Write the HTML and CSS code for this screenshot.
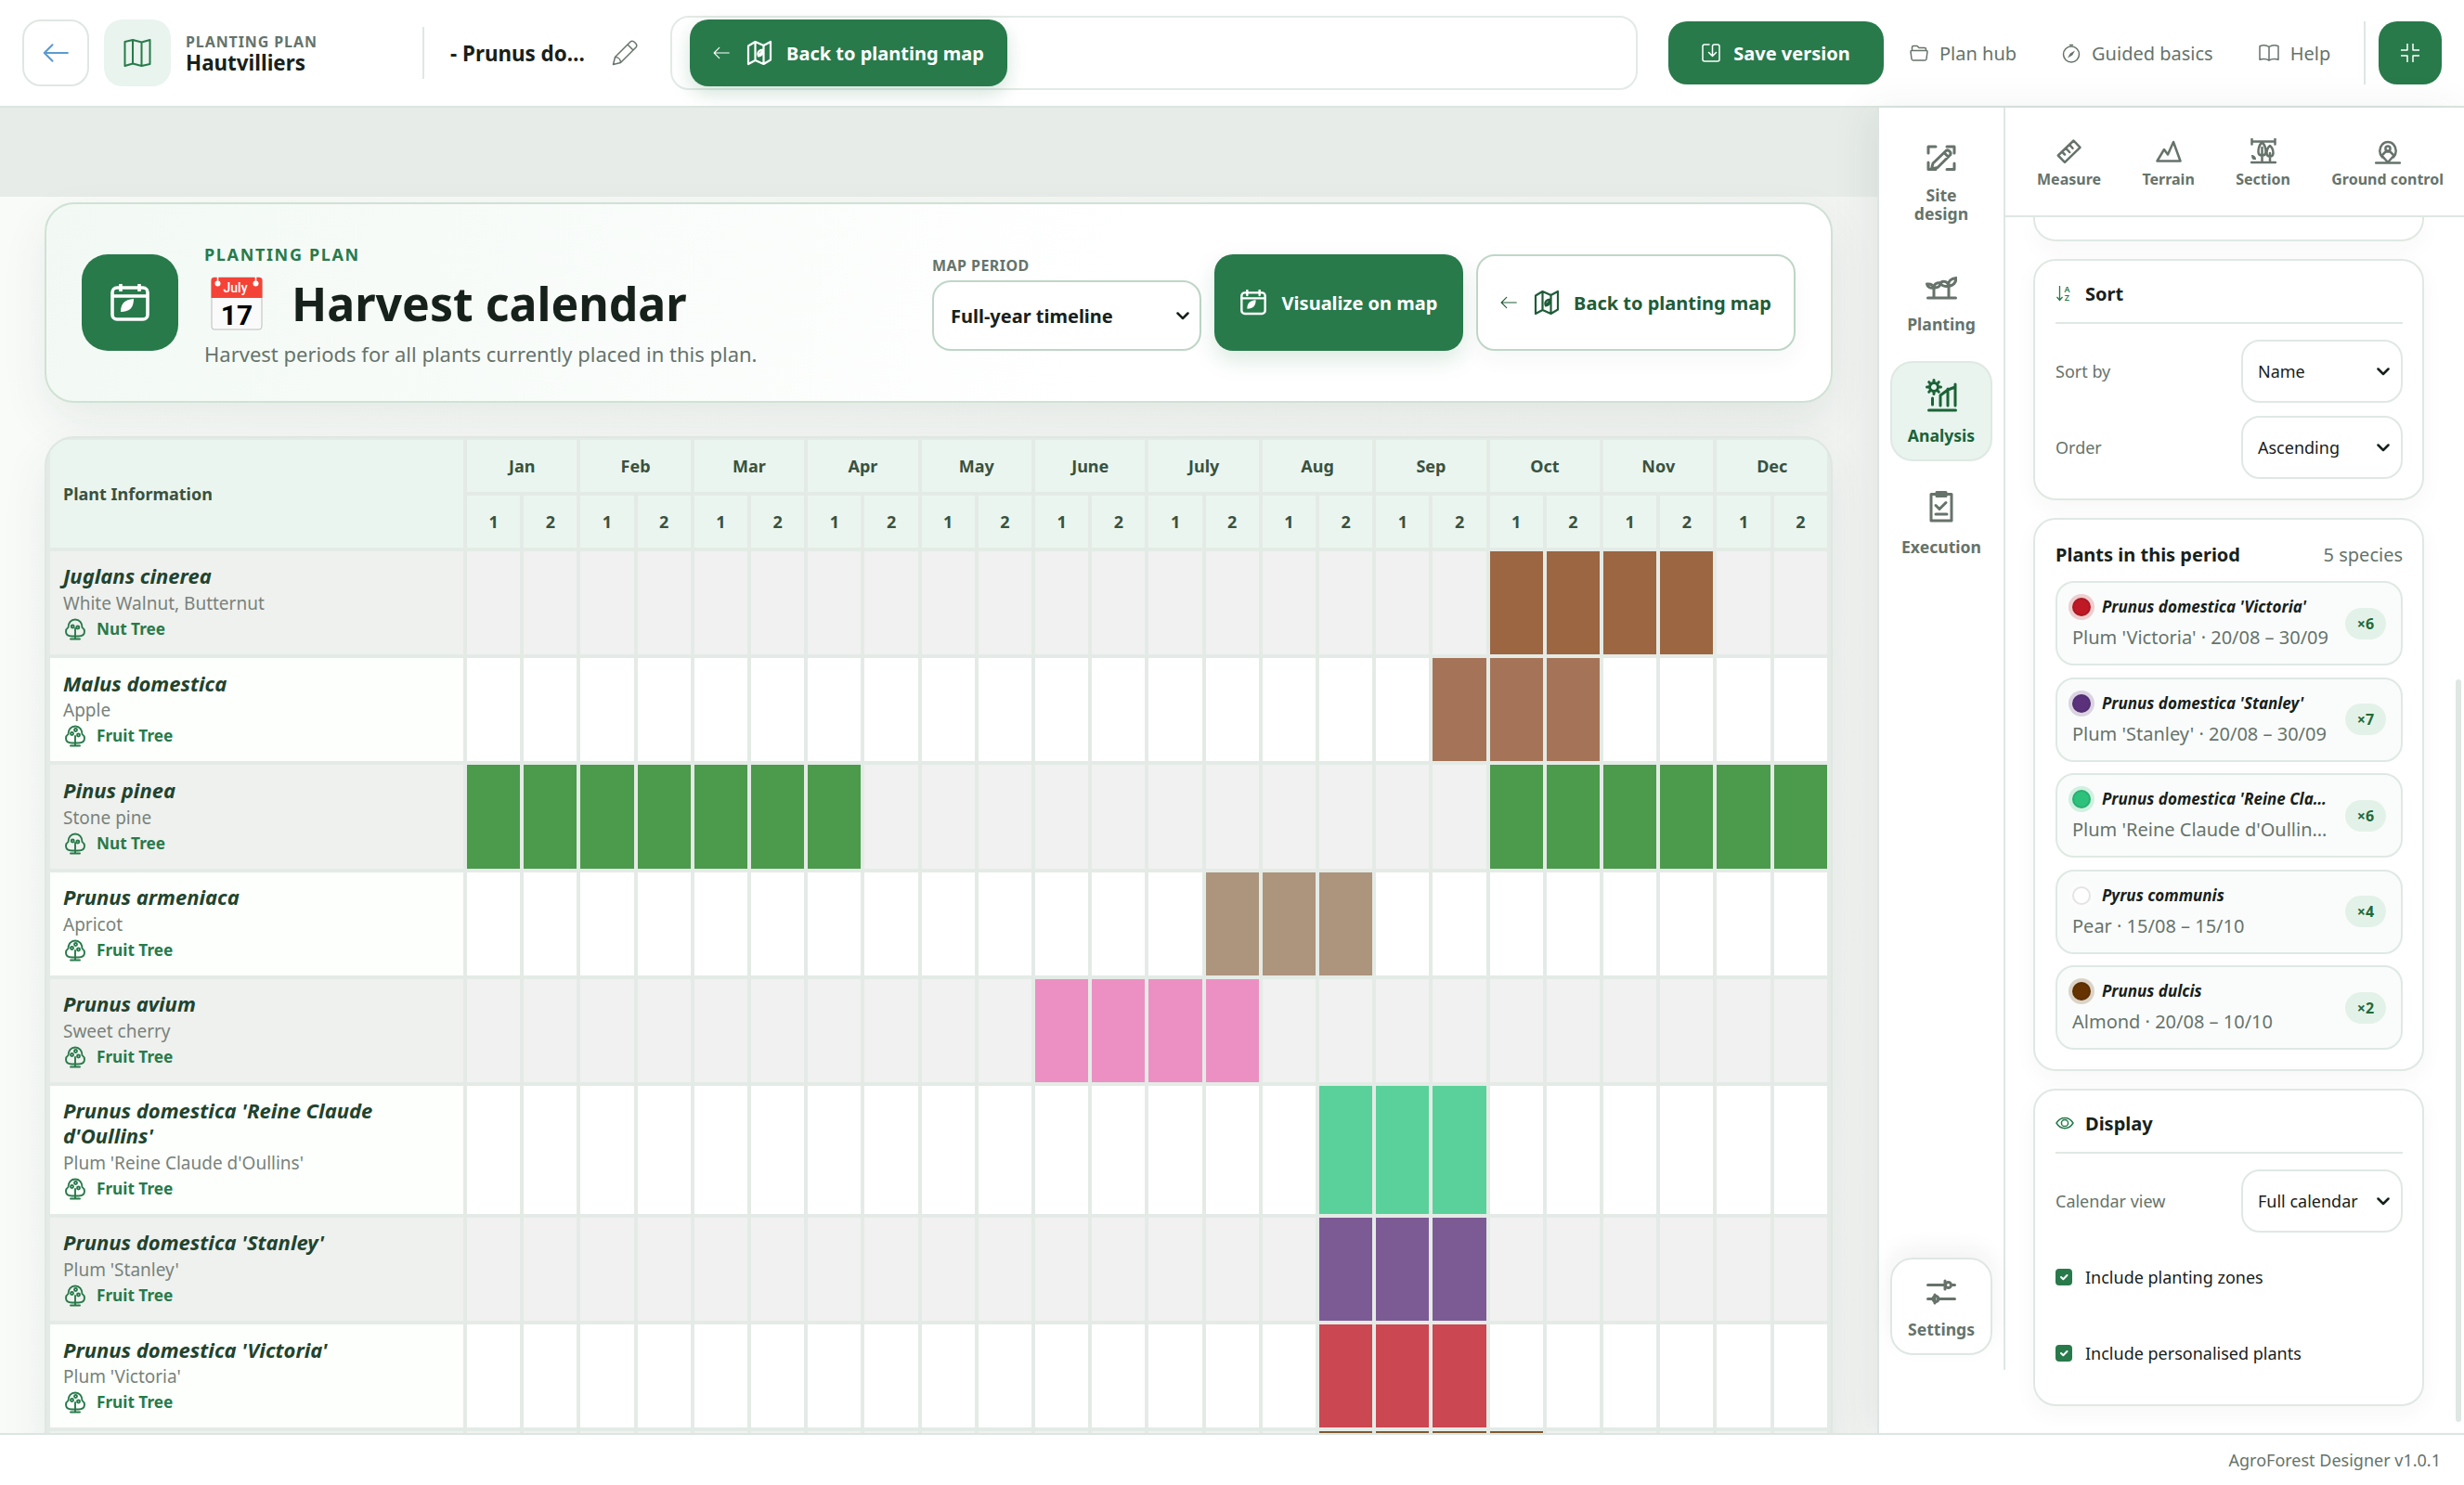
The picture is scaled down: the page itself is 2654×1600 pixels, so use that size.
FILE: index.html
```html
<!DOCTYPE html>
<html lang="en">
<head>
  <meta charset="UTF-8" />
  <meta name="viewport" content="width=device-width, initial-scale=1.0"/>
  <title>Harvest calendar – AgroForest Designer</title>
  <link rel="stylesheet" href="styles.css">
</head>
<body>

  <svg class="sprite" aria-hidden="true">
    <symbol id="i-arrow" viewBox="0 0 24 24"><path d="M23 12H2M9 4.500L1.500 12 9 19.500"/></symbol>
    <symbol id="i-map" viewBox="0 0 30 30"><path d="M1.500 3L10 1l9.500 2.500L28.500 1v26L19.500 29 10 26.500 1.500 29zM10 1v25.500M19.500 3.500V29"/></symbol>
    <symbol id="i-planmap" viewBox="0 0 28 28"><path d="M2 6.500L9.500 2l9 4L26 2v19.500L18.500 26l-9-4L2 26zM9.500 2v20M18.500 6v20"/><path d="M13 17.500c-2-4 1-7 5-7 0 4.500-1.500 6.500-5 7zm0 0l3.500-4.500"/></symbol>
    <symbol id="i-cal" viewBox="0 0 42 42"><rect x="2" y="5" width="38" height="34" rx="5"/><path d="M2 14h38M11 1v8M31 1v8"/><path class="solid" d="M11 31c0-9 4-13 14-14 0 9-4 14-14 14z"/></symbol>
    <symbol id="i-pencil" viewBox="0 0 28 28"><path d="M1.500 26.500l2-8L20 2c1.500-1.200 3-1 4.500.5l1 1c1.500 1.500 1.700 3 .5 4.500L9.500 24.500zM17 5l6 6M3.500 18.500c3.500 0 6 2.500 6 6"/></symbol>
    <symbol id="i-save" viewBox="0 0 20 20"><path d="M8 1H3Q1 1 1 3v14q0 2 2 2h14q2 0 2-2V3q0-2-2-2h-3.500q-2 0-2 2v10M7.500 9.500l4 4 4-4"/></symbol>
    <symbol id="i-folder" viewBox="0 0 20 18"><path d="M2.500 6V3q0-1.500 1.500-1.500h4l2 2h6q1.500 0 1.500 1.500v1M2 6.500h16q1 0 1 1l-1 8q-.2 1.500-1.500 1.500h-13Q2.200 17 2 15.500l-1-8q0-1 1-1z"/></symbol>
    <symbol id="i-compass" viewBox="0 0 20 21"><circle cx="10" cy="11.500" r="8.500"/><path d="M8.500 1.500h3"/><path class="solid" d="M14 7.500l-2.800 5L6 15.500l2.800-5z"/></symbol>
    <symbol id="i-book" viewBox="0 0 22 18"><path d="M11 2.500C8 .5 4 .5 1 1.800v14.500c3-1 7-1 10 .7 3-1.700 7-1.700 10-.7V1.800C18 .5 14 .5 11 2.500zV17"/></symbol>
    <symbol id="i-shrink" viewBox="0 0 20 20"><path d="M7 0v7H0M13 0v7h7M0 13h7v7M20 13h-7v7"/></symbol>

    <symbol id="i-design" viewBox="0 0 32 28"><path d="M2 9V2h8M22 2h8v7M30 20v6.500h-8M10 26.500H2V19"/><path d="M5.500 26l1.500-6L21 6.500q2-1.500 4 0.500t.5 4L12 24.500zM19 8.500l4.500 4.500"/></symbol>
    <symbol id="i-plant" viewBox="0 0 34 26"><path d="M2.500 24h30M9 24V13M25 24V11M9 13C5 14 2 12 1.500 9 5.500 8.500 8 10 9 13zM9 13c0-4 3-5.500 7-5.500 0 4-2.500 6-7 5.500zM25 11c-4 1-8 0-9-3.500C20 5 24 6.500 25 11zM25 11c-1-5 2.500-8 8-8.500C33 7 30 11 25 11z"/></symbol>
    <symbol id="i-analysis" viewBox="0 0 34 36"><circle cx="9" cy="9" r="4.500"/><path d="M9 1.500v3M9 13.500v3M1.500 9h3M13.500 9h3M3.700 3.700l2 2M14.300 3.700l-2 2M3.700 14.300l2-2M14.300 14.300l-2-2M3.500 34h29M7.500 21v7M16 29V18M24 29V11M32 29V6M16 18l8-6 8-3"/></symbol>
    <symbol id="i-task" viewBox="0 0 26 34"><path d="M2 3.500h22v28.500H2zM8 1.500h10v4H8zM7 15.500l4 4 7-7M7 25h12"/></symbol>
    <symbol id="i-sliders" viewBox="0 0 32 28"><path d="M1.500 6.500h18M27 6.500h3.500M1.500 21.500H6M12.500 21.500h18M20 2v9M9 17v9"/><circle cx="23.500" cy="6.500" r="3"/><circle cx="10" cy="21.500" r="3"/></symbol>

    <symbol id="i-measure" viewBox="0 0 28 28"><path d="M1.800 18.500L18.500 2.500l7 7.300L9 25.800zM6 14.500l3 3M10 10.500l4.200 4.500M14 6.700l3.500 4"/></symbol>
    <symbol id="i-terrain" viewBox="0 0 28 28"><path d="M1.500 24.500L9 12l4 5.500L19 4l7.500 20.500z"/></symbol>
    <symbol id="i-section" viewBox="0 0 28 28"><path d="M1.500 0.500v6M26.500 .5v6M1.500 3.500h25M1 26h26M12.500 25V10M21 25v-9M12.500 4.500c-3 2.500-4 6-4 10q0 4 4 4t4-4c0-4-1-7.500-4-10zM21 8c-2.500 2-3.500 5-3.500 8q0 3.500 3.500 3.500t3.500-3.500c0-3-1-6-3.500-8z"/><path class="solid" d="M1 18c3 0 5 1.500 5 5H3.500C2 23 1 21 1 18z"/></symbol>
    <symbol id="i-ground" viewBox="0 0 28 28"><path d="M1 26.500h26M8 20.500A8.700 9.500 0 1 1 20 20.500M14 26c-2.500-3-5-5.500-6.500-7.500l4-4h5l4 4C19 20.500 16.500 23 14 26z"/><circle cx="14" cy="11" r="2.600"/></symbol>

    <symbol id="i-nut" viewBox="0 0 24 24"><path d="M7 22.500h10M12 22V11M8.500 19.500h7c4 0 6.500-2 6.500-5 0-2-1-3.500-2.500-4.500C19.500 5 16.500 1.500 12 1.500S4.500 5 4.500 10C3 11 2 12.500 2 14.500c0 3 2.500 5 6.500 5z"/><circle cx="9.200" cy="9" r="1.500"/><circle cx="14.800" cy="10" r="1.500"/></symbol>
    <symbol id="i-fruit" viewBox="0 0 24 24"><path d="M7 22.500h10M12 22V12M8.500 19.500h7c4 0 6.500-2 6.500-5 0-2-1-3.500-2.500-4.500C19.500 5 16.500 1.500 12 1.500S4.500 5 4.500 10C3 11 2 12.500 2 14.500c0 3 2.500 5 6.500 5z"/><circle cx="8.500" cy="9.500" r="1.500"/><circle cx="12.500" cy="5.500" r="1.500"/><circle cx="15.500" cy="11" r="1.500"/></symbol>

    <symbol id="i-eye" viewBox="0 0 20 14"><path d="M1 7c4.500-7.500 13.500-7.500 18 0-4.500 7.500-13.500 7.500-18 0z"/><circle cx="10" cy="7" r="3.600"/></symbol>
    <symbol id="i-chev" viewBox="0 0 14 9"><path d="M1.500 1.500L7 7l5.500-5.500"/></symbol>
    <symbol id="i-check" viewBox="0 0 18 18"><path d="M6 9l2.300 2.200L12.500 7"/></symbol>
  </svg>

  <header class="topbar">
    <button class="back-btn"><svg class="icon"><use href="#i-arrow"/></svg></button>
    <div class="plan-tile"><svg class="icon"><use href="#i-map"/></svg></div>
    <div class="plan-name">
      <span class="eyebrow">PLANTING PLAN</span>
      <strong>Hautvilliers</strong>
    </div>
    <div class="version-name">
      <strong>- Prunus do…</strong>
      <svg class="icon"><use href="#i-pencil"/></svg>
    </div>
    <div class="context-bar">
      <button class="primary-btn map-btn">
        <svg class="icon arrow"><use href="#i-arrow"/></svg>
        <svg class="icon map"><use href="#i-planmap"/></svg>
        Back to planting map
      </button>
    </div>
    <button class="primary-btn save-btn"><svg class="icon"><use href="#i-save"/></svg>Save version</button>
    <nav class="top-links">
      <a><svg class="icon folder"><use href="#i-folder"/></svg>Plan hub</a>
      <a><svg class="icon compass"><use href="#i-compass"/></svg>Guided basics</a>
      <a><svg class="icon book"><use href="#i-book"/></svg>Help</a>
    </nav>
    <div class="shrink-wrap">
      <button class="primary-btn shrink-btn"><svg class="icon"><use href="#i-shrink"/></svg></button>
    </div>
  </header>

  <div class="workspace">
    <main>
      <div class="map-strip"></div>

      <section class="hero">
        <div class="hero-icon"><svg class="icon"><use href="#i-cal"/></svg></div>
        <div class="hero-text">
          <span class="hero-eyebrow">PLANTING PLAN</span>
          <h1>
            <svg class="date-icon" viewBox="0 0 56 58">
              <rect class="page" x="1" y="1" width="54" height="56" rx="3"/>
              <path class="band" d="M.5 23V4q0-3 3-3h49q3 0 3 3v19z"/>
              <circle cx="7.500" cy="7.500" r="3"/><circle cx="48.500" cy="7.500" r="3"/>
              <path class="pin" d="M7.500 0v7M48.500 0v7"/>
              <text class="month" x="26.500" y="17">July</text>
              <text class="day" x="28" y="52">17</text>
            </svg>
            Harvest calendar
          </h1>
          <p>Harvest periods for all plants currently placed in this plan.</p>
        </div>
        <div class="hero-actions">
          <div class="period">
            <label>MAP PERIOD</label>
            <div class="select">Full-year timeline<svg class="icon"><use href="#i-chev"/></svg></div>
          </div>
          <button class="primary-btn visualize-btn"><svg class="icon"><use href="#i-cal"/></svg>Visualize on map</button>
          <button class="outline-btn">
            <svg class="icon arrow"><use href="#i-arrow"/></svg>
            <svg class="icon map"><use href="#i-planmap"/></svg>
            Back to planting map
          </button>
        </div>
      </section>

      <div class="calendar">
        <table id="harvestTable">
          <thead></thead>
          <tbody></tbody>
        </table>
      </div>
    </main>

    <aside class="sidebar">
      <nav class="rail">
        <a class="rail-item tall"><svg class="icon design"><use href="#i-design"/></svg>Site<br>design</a>
        <a class="rail-item"><svg class="icon planting"><use href="#i-plant"/></svg>Planting</a>
        <a class="rail-item active"><svg class="icon analysis"><use href="#i-analysis"/></svg>Analysis</a>
        <a class="rail-item"><svg class="icon task"><use href="#i-task"/></svg>Execution</a>
        <a class="rail-item settings"><svg class="icon sliders"><use href="#i-sliders"/></svg>Settings</a>
      </nav>

      <div class="panel">
        <nav class="panel-tabs">
          <a><svg class="icon"><use href="#i-measure"/></svg>Measure</a>
          <a><svg class="icon"><use href="#i-terrain"/></svg>Terrain</a>
          <a><svg class="icon"><use href="#i-section"/></svg>Section</a>
          <a><svg class="icon"><use href="#i-ground"/></svg>Ground control</a>
        </nav>

        <div class="panel-body">
          <div class="card card-cut"></div>

          <div class="card">
            <h2>
              <svg class="sort-icon" viewBox="0 0 18 18">
                <path d="M4.500 1v15M1.500 13l3 3.500 3-3.500"/>
                <text x="9.500" y="8">A</text><text x="9.700" y="17">Z</text>
              </svg>
              Sort
            </h2>
            <div class="field"><label>Sort by</label><div class="select small">Name<svg class="icon"><use href="#i-chev"/></svg></div></div>
            <div class="field"><label>Order</label><div class="select small">Ascending<svg class="icon"><use href="#i-chev"/></svg></div></div>
          </div>

          <div class="card">
            <div class="card-head"><strong>Plants in this period</strong><span>5 species</span></div>
            <div class="species-list" id="speciesList"></div>
          </div>

          <div class="card display-card">
            <h2><svg class="icon eye"><use href="#i-eye"/></svg>Display</h2>
            <div class="field"><label>Calendar view</label><div class="select small">Full calendar<svg class="icon"><use href="#i-chev"/></svg></div></div>
            <div class="check"><svg class="icon"><use href="#i-check"/></svg>Include planting zones</div>
            <div class="check"><svg class="icon"><use href="#i-check"/></svg>Include personalised plants</div>
          </div>
        </div>
        <div class="scroll-thumb"></div>
      </div>
    </aside>
  </div>

  <footer>AgroForest Designer v1.0.1</footer>

  <script>
    const months = ["Jan", "Feb", "Mar", "Apr", "May", "June", "July", "Aug", "Sep", "Oct", "Nov", "Dec"];

    // periods are half months, 0 = first half of January
    const plants = [
      { name: "Juglans cinerea", common: "White Walnut, Butternut", type: "Nut Tree", color: "#9b6641", periods: [[18, 21]] },
      { name: "Malus domestica", common: "Apple", type: "Fruit Tree", color: "#a57458", periods: [[17, 19]] },
      { name: "Pinus pinea", common: "Stone pine", type: "Nut Tree", color: "#4c9a4b", periods: [[0, 6], [18, 23]] },
      { name: "Prunus armeniaca", common: "Apricot", type: "Fruit Tree", color: "#ad947c", periods: [[13, 15]] },
      { name: "Prunus avium", common: "Sweet cherry", type: "Fruit Tree", color: "#ec90c4", periods: [[10, 13]] },
      { name: "Prunus domestica 'Reine Claude d'Oullins'", common: "Plum 'Reine Claude d'Oullins'", type: "Fruit Tree", color: "#5ad19a", periods: [[15, 17]] },
      { name: "Prunus domestica 'Stanley'", common: "Plum 'Stanley'", type: "Fruit Tree", color: "#7c5b95", periods: [[15, 17]] },
      { name: "Prunus domestica 'Victoria'", common: "Plum 'Victoria'", type: "Fruit Tree", color: "#cb4751", periods: [[15, 17]] },
      { name: "", common: "", type: "", color: "#80592f", periods: [[15, 18]] }
    ];

    const species = [
      { name: "Prunus domestica 'Victoria'", info: "Plum 'Victoria' · 20/08 – 30/09", count: 6, color: "#be1925" },
      { name: "Prunus domestica 'Stanley'", info: "Plum 'Stanley' · 20/08 – 30/09", count: 7, color: "#5b317b" },
      { name: "Prunus domestica 'Reine Cla…", info: "Plum 'Reine Claude d'Oullin…", count: 6, color: "#2dc27c" },
      { name: "Pyrus communis", info: "Pear · 15/08 – 15/10", count: 4, color: "#ffffff" },
      { name: "Prunus dulcis", info: "Almond · 20/08 – 10/10", count: 2, color: "#653200" }
    ];

    function renderTable() {
      document.querySelector("#harvestTable thead").innerHTML = `
        <tr>
          <th class="info-head" rowspan="2">Plant Information</th>
          ${months.map(m => `<th colspan="2">${m}</th>`).join("")}
        </tr>
        <tr>${months.map(() => "<th>1</th><th>2</th>").join("")}</tr>
      `;

      const tbody = document.querySelector("#harvestTable tbody");
      plants.forEach(plant => {
        const row = document.createElement("tr");
        let cells = "";
        for (let i = 0; i < 24; i++) {
          const on = plant.periods.some(p => i >= p[0] && i <= p[1]);
          cells += on ? `<td style="background:${plant.color}"></td>` : "<td></td>";
        }
        const icon = plant.type === "Nut Tree" ? "i-nut" : "i-fruit";
        row.innerHTML = `
          <td class="info">
            <div class="latin">${plant.name}</div>
            <div class="common">${plant.common}</div>
            <div class="type"><svg class="icon"><use href="#${icon}"/></svg>${plant.type}</div>
          </td>
          ${cells}
        `;
        tbody.appendChild(row);
      });
    }

    function renderSpecies() {
      document.getElementById("speciesList").innerHTML = species.map(s => `
        <div class="species">
          <div class="species-text">
            <div class="species-name"><i class="dot" style="background:${s.color};--ring:${s.color}33"></i><span>${s.name}</span></div>
            <div class="species-info">${s.info}</div>
          </div>
          <span class="count">×${s.count}</span>
        </div>
      `).join("");
    }

    renderTable();
    renderSpecies();
  </script>

</body>
</html>
```
FILE: styles.css
```css
* {
  box-sizing: border-box;
}

body {
  margin: 0;
  height: 1600px;
  display: flex;
  flex-direction: column;
  overflow: hidden;
  font-family: "Noto Sans", sans-serif;
  font-size: 20px;
  color: #17211b;
  background: #fff;
}

button {
  font: inherit;
  padding: 0;
  cursor: pointer;
}

.sprite {
  position: absolute;
  width: 0;
  height: 0;
}

.icon {
  flex: none;
  fill: none;
  stroke: currentColor;
  stroke-width: 1.5;
  stroke-linecap: round;
  stroke-linejoin: round;
  overflow: visible;
}

.solid {
  fill: currentColor;
  stroke: none;
}

/* top bar */
.topbar {
  flex: none;
  height: 116px;
  display: flex;
  align-items: center;
  padding: 0 24px;
  border-bottom: 2px solid #dce6e0;
  background: #fff;
}

.back-btn {
  width: 72px;
  height: 72px;
  border: 2px solid #dfe7e2;
  border-radius: 20px;
  background: #fff;
  color: #5b9bd0;
  display: grid;
  place-items: center;
}

.back-btn .icon {
  width: 28px;
  height: 28px;
  stroke-width: 1.8;
}

.plan-tile {
  width: 72px;
  height: 72px;
  margin-left: 16px;
  border-radius: 20px;
  background: #e8f4ed;
  color: #287a4b;
  display: grid;
  place-items: center;
}

.plan-tile .icon {
  width: 30px;
  height: 30px;
  stroke-width: 2;
}

.plan-name {
  width: 257px;
  height: 56px;
  margin-left: 16px;
  display: flex;
  flex-direction: column;
  justify-content: center;
  gap: 2px;
  border-right: 2px solid #dfe7e2;
}

.plan-name strong {
  font-size: 22.400px;
  line-height: 23px;
}

.eyebrow {
  font-size: 16px;
  line-height: 18px;
  font-weight: 700;
  letter-spacing: 0.9px;
  color: #66736b;
}

.version-name {
  width: 265px;
  padding-left: 28px;
  display: flex;
  align-items: center;
  gap: 30px;
  color: #66736b;
}

.version-name strong {
  width: 144px;
  font-size: 22.400px;
  color: #17211b;
  white-space: nowrap;
}

.version-name .icon {
  width: 28px;
  height: 28px;
}

.context-bar {
  width: 1042px;
  height: 80px;
  display: flex;
  align-items: center;
  padding-left: 19px;
  border: 2px solid #e3eae6;
  border-radius: 20px;
}

.primary-btn {
  border: none;
  border-radius: 20px;
  background: #287a4b;
  color: #fff;
  font-weight: 700;
  display: flex;
  align-items: center;
  justify-content: center;
}

.map-btn {
  width: 342px;
  height: 72px;
  box-shadow: 0 8px 20px rgba(40, 122, 75, 0.2);
}

.arrow {
  width: 18px;
  height: 18px;
  margin-right: 18px;
}

.map {
  width: 28px;
  height: 28px;
  margin-right: 15px;
  stroke-width: 2.2;
}

.save-btn {
  width: 232px;
  height: 68px;
  margin-left: 33px;
  gap: 14px;
}

.save-btn .icon {
  width: 20px;
  height: 20px;
}

.top-links {
  display: flex;
  margin-left: 28px;
  gap: 49px;
  color: #66736b;
}

.top-links a {
  display: flex;
  align-items: center;
  gap: 12px;
  white-space: nowrap;
}

.folder {
  width: 20px;
  height: 18px;
}

.compass {
  width: 20px;
  height: 21px;
}

.book {
  width: 22px;
  height: 18px;
}

.shrink-wrap {
  margin-left: auto;
  padding-left: 14px;
  border-left: 2px solid #dfe7e2;
}

.shrink-btn {
  width: 68px;
  height: 68px;
}

.shrink-btn .icon {
  width: 20px;
  height: 20px;
  stroke-linecap: butt;
}

/* main area */
.workspace {
  flex: 1;
  min-height: 0;
  display: flex;
}

main {
  width: 2022px;
  overflow: hidden;
  background: linear-gradient(90deg, #f9fbf9, #f2f4f2);
}

.map-strip {
  height: 96px;
  background: #e7ece8;
}

.hero {
  height: 216px;
  margin: 6px 48px 0;
  padding: 0 38px;
  display: flex;
  align-items: center;
  border: 2px solid #cfe1d5;
  border-radius: 32px;
  background: linear-gradient(105deg, #f2f9f4, #fff 60%);
  box-shadow: 0 20px 50px rgba(30, 60, 42, 0.08);
}

.hero-icon {
  width: 104px;
  height: 104px;
  border-radius: 28px;
  background: #287a4b;
  color: #fff;
  display: grid;
  place-items: center;
}

.hero-icon .icon {
  width: 42px;
  height: 42px;
  stroke-width: 3.6;
  stroke-linecap: butt;
}

.hero-text {
  margin-left: 28px;
  padding-top: 6px;
}

.hero-eyebrow {
  display: block;
  font-size: 18px;
  line-height: 24px;
  font-weight: 700;
  letter-spacing: 1.65px;
  color: #287a4b;
}

h1 {
  margin: 12px 0 9px;
  display: flex;
  align-items: center;
  gap: 31px;
  font-size: 50px;
  line-height: 58px;
}

.date-icon {
  width: 56px;
  height: 58px;
  margin-left: 7px;
  fill: #fff;
}

.date-icon .page {
  fill: #fafafa;
  stroke: #bdbdbd;
}

.date-icon .band {
  fill: #f44336;
}

.date-icon .pin {
  stroke: #fff;
  stroke-width: 1.5;
}

.date-icon text {
  font-family: Roboto, sans-serif;
  font-weight: 500;
  text-anchor: middle;
}

.date-icon .month {
  font-size: 14px;
}

.date-icon .day {
  font-size: 30px;
  font-weight: 700;
  fill: #000;
}

.hero-text p {
  margin: 0;
  font-size: 22px;
  line-height: 32px;
  color: #66736b;
}

.hero-actions {
  margin-left: auto;
  display: flex;
  align-items: flex-end;
  gap: 14px;
}

.period label {
  display: block;
  font-size: 16px;
  line-height: 22px;
  margin-bottom: 5px;
  font-weight: 700;
  letter-spacing: 0.45px;
  color: #66736b;
}

.select {
  width: 290px;
  height: 76px;
  display: flex;
  align-items: center;
  justify-content: space-between;
  padding: 0 11px 0 18px;
  border: 2px solid #bfd6c7;
  border-radius: 20px;
  background: #fff;
  font-weight: 700;
}

.select .icon {
  width: 14px;
  height: 9px;
  stroke-width: 2.5;
}

.visualize-btn {
  width: 268px;
  height: 104px;
  gap: 17px;
  box-shadow: 0 10px 24px rgba(40, 122, 75, 0.16);
}

.visualize-btn .icon {
  width: 28px;
  height: 28px;
  stroke-width: 3.6;
}

.outline-btn {
  width: 344px;
  height: 104px;
  display: flex;
  align-items: center;
  justify-content: center;
  border: 2px solid #bfd6c7;
  border-radius: 20px;
  background: #fff;
  color: #1f5c38;
  font-weight: 700;
  box-shadow: 0 10px 24px rgba(30, 60, 42, 0.04);
}

/* calendar */
.calendar {
  height: 1200px;
  margin: 36px 48px 0;
  border: 2px solid #dfe7e2;
  border-radius: 32px;
  overflow: hidden;
  background: #e4ebe6;
  box-shadow: 0 20px 50px rgba(30, 60, 42, 0.08);
}

table {
  width: 100%;
  table-layout: fixed;
  border-collapse: separate;
  border-spacing: 4px;
  margin-top: -2px;
}

th {
  height: 56px;
  padding: 0;
  font-size: 18px;
  font-weight: 700;
  color: #39523f;
  background: #ebf5ef;
}

.info-head {
  width: 445px;
  padding-left: 14px;
  text-align: left;
}

td {
  padding: 0;
  background: #fff;
}

tbody tr:nth-child(odd) td {
  background: #f1f1f1;
}

td.info {
  height: 111.200px;
  padding: 13.400px 14px 14px;
  background: #fcfffb;
}

tbody tr:nth-child(odd) td.info {
  background: #eff1ee;
}

.latin {
  font-size: 22px;
  line-height: 26.800px;
  font-weight: 700;
  font-style: italic;
  color: #21432e;
}

.common {
  margin-top: 2px;
  font-size: 19px;
  line-height: 29px;
  color: #78827c;
}

.type {
  display: flex;
  align-items: center;
  gap: 11px;
  font-size: 17.200px;
  line-height: 26px;
  font-weight: 700;
  color: #287a4b;
}

.type .icon {
  width: 24px;
  height: 24px;
  margin-left: 1px;
  stroke-width: 1.9;
}

/* sidebar */
.sidebar {
  flex: 1;
  display: flex;
  border-left: 2px solid #dce6e0;
  background: #fff;
  box-shadow: -10px 0 40px rgba(30, 60, 42, 0.07);
}

.rail {
  width: 136px;
  height: 1360px;
  padding: 14px 12px 16px;
  display: flex;
  flex-direction: column;
  gap: 12px;
  border-right: 2px solid #dfe7e2;
}

.rail-item {
  height: 108px;
  display: flex;
  flex-direction: column;
  align-items: center;
  justify-content: flex-end;
  padding-bottom: 16px;
  border: 2px solid transparent;
  border-radius: 24px;
  font-size: 17.600px;
  line-height: 20px;
  font-weight: 700;
  text-align: center;
  color: #66736b;
}

.rail-item .icon {
  stroke-width: 3;
}

.rail-item.tall {
  height: 127px;
  padding-bottom: 15px;
}

.rail-item.active {
  background: #e8f4ed;
  border-color: #dfe9e3;
  color: #1b6338;
}

.rail-item.settings {
  height: 105px;
  margin-top: auto;
  border-color: #dfe7e2;
  box-shadow: 0 -10px 24px rgba(30, 40, 34, 0.06);
}

.design {
  width: 32px;
  height: 28px;
  margin-bottom: 16px;
}

.planting {
  width: 34px;
  height: 26px;
  margin-bottom: 16px;
}

.analysis {
  width: 34px;
  height: 36px;
  margin-bottom: 15px;
}

.task {
  width: 26px;
  height: 34px;
  margin-bottom: 16px;
}

.sliders {
  width: 32px;
  height: 28px;
  margin-bottom: 16px;
}

.panel {
  flex: 1;
  position: relative;
  display: flex;
  flex-direction: column;
  min-width: 0;
}

.panel-tabs {
  flex: none;
  height: 118px;
  display: flex;
  justify-content: space-between;
  padding: 33px 22px 0 34px;
  border-bottom: 2px solid #dfe7e2;
}

.panel-tabs a {
  display: flex;
  flex-direction: column;
  align-items: center;
  gap: 5px;
  font-size: 16px;
  line-height: 22px;
  font-weight: 700;
  color: #66736b;
}

.panel-tabs .icon {
  width: 28px;
  height: 28px;
  stroke-width: 2.5;
}

.panel-body {
  flex: 1;
  min-height: 0;
  overflow: hidden;
  padding: 0 43px 0 30px;
}

.card {
  margin-bottom: 19px;
  padding: 0 21px 21px 22px;
  border: 2px solid #e0e8e3;
  border-radius: 24px;
  background: #fff;
  box-shadow: 0 8px 24px rgba(30, 40, 34, 0.04);
}

.display-card {
  padding-bottom: 14px;
}

.card-cut {
  height: 26px;
  padding: 0;
  border-top: none;
  border-radius: 0 0 24px 24px;
}

.card h2 {
  height: 68px;
  margin: 0 0 17px;
  padding-top: 4px;
  display: flex;
  align-items: center;
  gap: 14px;
  border-bottom: 2px solid #e0e8e3;
  font-size: 20px;
}

.sort-icon {
  width: 18px;
  height: 18px;
  overflow: visible;
  fill: none;
  stroke: #287a4b;
  stroke-width: 1.3;
}

.sort-icon text {
  font-size: 9px;
  font-weight: 600;
  fill: #287a4b;
  stroke: none;
}

.eye {
  width: 20px;
  height: 14px;
  margin-right: -2px;
  color: #287a4b;
}

.field {
  display: flex;
  align-items: center;
  justify-content: space-between;
  font-size: 18px;
}

.field + .field {
  margin-top: 14px;
}

.field label {
  color: #66736b;
}

.select.small {
  width: 174px;
  height: 68px;
  padding: 0 12px 0 16px;
  border-color: #e0e8e3;
  font-weight: 400;
}

.card-head {
  display: flex;
  justify-content: space-between;
  align-items: center;
  padding-top: 24px;
  line-height: 28px;
  margin-bottom: 14px;
}

.card-head span {
  color: #66736b;
}

.species-list {
  display: grid;
  gap: 12.500px;
}

.species {
  height: 91px;
  display: flex;
  align-items: center;
  justify-content: space-between;
  padding: 0 16px;
  border: 2px solid #dfe9e3;
  border-radius: 20px;
  background: #fafcfb;
}

.species-text {
  width: 278px;
}

.species-name,
.species-info {
  white-space: nowrap;
  line-height: 33px;
}

.species-name {
  display: flex;
  align-items: center;
  gap: 12px;
  padding-bottom: 2px;
  font-size: 17px;
  line-height: 30px;
  font-weight: 700;
  font-style: italic;
}

.species-info {
  padding-bottom: 2px;
  line-height: 31px;
  color: #66736b;
}

.dot {
  flex: none;
  width: 20px;
  height: 20px;
  border: 2px solid rgba(23, 33, 27, 0.12);
  border-radius: 50%;
  box-shadow: 0 0 0 4px var(--ring);
}

.count {
  width: 44px;
  height: 34px;
  border-radius: 17px;
  background: #e3f2e8;
  color: #1f6a3c;
  font-size: 16px;
  line-height: 34px;
  font-weight: 700;
  text-align: center;
}

.check {
  height: 82px;
  display: flex;
  align-items: center;
  gap: 14px;
  font-size: 18px;
}

.field + .check {
  margin-top: 7px;
}

.check .icon {
  width: 18px;
  height: 18px;
  border-radius: 4px;
  background: #287a4b;
  color: #fff;
  stroke-width: 2;
}

.scroll-thumb {
  position: absolute;
  right: 3px;
  top: 616px;
  width: 6px;
  height: 800px;
  border-radius: 3px;
  background: #dfe7e3;
}

footer {
  flex: none;
  height: 56px;
  padding: 0 25px;
  border-top: 2px solid #dce6e0;
  background: #fff;
  text-align: right;
  font-size: 18px;
  line-height: 54px;
  color: #66736b;
  position: relative;
}
```
